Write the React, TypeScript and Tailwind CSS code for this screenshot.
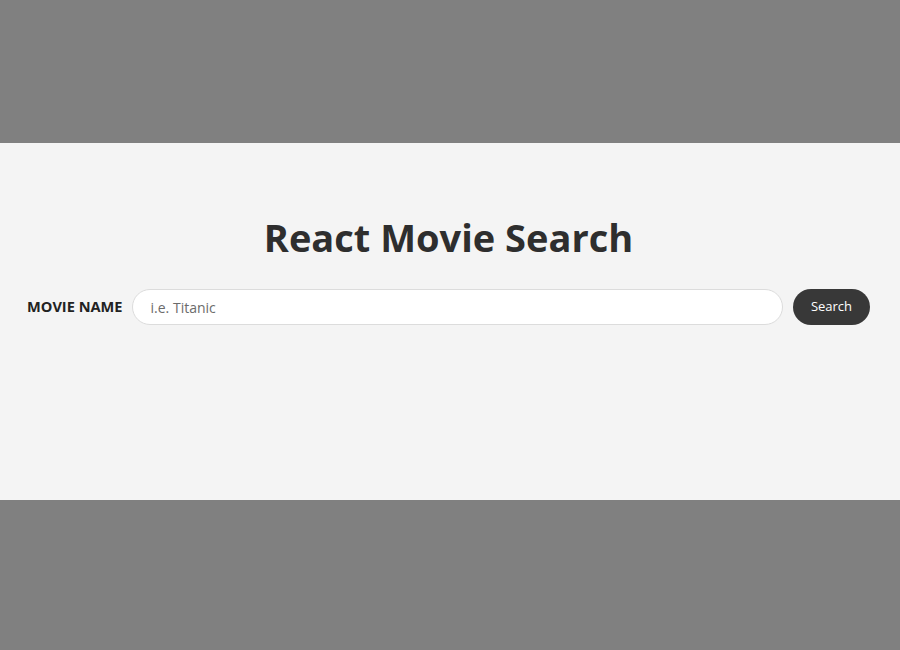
export default function App() {
  return (
    <div className="flex h-[650px] w-[900px] flex-col bg-[#808080]" style={{ fontFamily: '"Open Sans", "Noto Sans", sans-serif' }}>
      <div className="h-[143px]" />
      <div className="flex h-[357px] flex-col bg-[#f4f4f4] pl-[27px] pr-[30px] pt-[70px]">
        <h1 className="text-center text-[38px] font-bold leading-[48px] text-[#2e2e2e]">React Movie Search</h1>
        <form className="mt-[28px] flex items-center" onSubmit={(e) => e.preventDefault()}>
          <label className="mr-[9px] text-[14.6px] font-bold text-[#222]">MOVIE NAME</label>
          <input
            className="h-[36px] flex-1 rounded-full border border-[#dcdcdc] bg-white px-[18px] text-[14px] text-[#333] outline-none placeholder:text-[#6b6b6b]"
            placeholder="i.e. Titanic"
          />
          <button className="ml-[10px] h-[36px] w-[77px] rounded-full bg-[#383838] text-[13px] text-white">Search</button>
        </form>
      </div>
    </div>
  );
}
